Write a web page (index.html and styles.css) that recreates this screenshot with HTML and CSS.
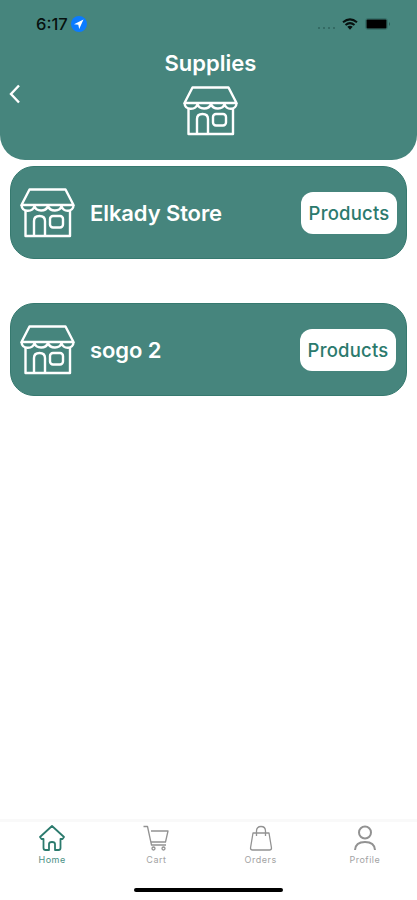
FILE: index.html
```
<!DOCTYPE html>
<html lang="en">

<head>
    <meta charset="UTF-8">
    <title>Supplies</title>
    <link rel="stylesheet" href="styles.css">
</head>

<body>
    <!-- Store icon, used in the header and in each card -->
    <svg class="symbols">
        <symbol id="store" viewBox="0 0 56 50">
            <path d="M9.500 1.500H45.500L53.500 17H1.500L9.500 1.500Z" />
            <path d="M1.500 17C2 24.500 12.500 24.500 14.500 18C16 24 26 24 28 18C30 24 40 24 41.500 18C43.500 24.500 53.500 24.500 53.500 17" />
            <path d="M5.500 22.500V48H50V22.500" />
            <path d="M14 48V33Q14 28 19.500 28T25 33V48" />
            <rect x="30" y="28" width="13" height="11.500" rx="3" />
        </symbol>
    </svg>

    <div class="screen">
        <header class="header">
            <div class="status">
                <span class="time">6:17</span>
                <svg class="location" viewBox="0 0 16 16">
                    <circle cx="8" cy="8" r="8" fill="#0b7bff" />
                    <path d="M12.500 3.400L3 8.200L7.300 8.800L8.200 13Z" fill="#fff" />
                </svg>
                <div class="signal"><i></i><i></i><i></i><i></i></div>
                <svg class="wifi" viewBox="0 0 16 12">
                    <path d="M1 4.300Q8-1.500 15 4.300M3.500 7Q8 3.300 12.500 7" fill="none" stroke="#07110f" stroke-width="2" />
                    <path d="M5.300 8.800Q8 6.800 10.700 8.800L8 11.700Z" fill="#07110f" />
                </svg>
                <svg class="battery" viewBox="0 0 26 12">
                    <rect x=".5" y=".5" width="22" height="11" rx="2.500" fill="none" stroke="#37706a" />
                    <rect x="1.500" y="1.500" width="20" height="9" rx="1" fill="#000" />
                    <path d="M24 4Q26 6 24 8Z" fill="#2b5953" />
                </svg>
            </div>
            <h1 class="title">Supplies</h1>
            <div class="nav">
                <svg class="back" viewBox="0 0 12 20"><path d="M10 1.500L2 10L10 18.500" /></svg>
                <svg class="store"><use href="#store" /></svg>
            </div>
        </header>

        <main class="list">
            <div class="card">
                <svg class="store"><use href="#store" /></svg>
                <h2 class="name">Elkady Store</h2>
                <button class="products">Products</button>
            </div>
            <div class="card">
                <svg class="store"><use href="#store" /></svg>
                <h2 class="name">sogo 2</h2>
                <button class="products">Products</button>
            </div>
        </main>

        <nav class="tabs">
            <div class="tab active">
                <svg viewBox="0 0 28 28">
                    <path d="M14 2L26 13L24.500 15H22.500V24Q22.500 26 20.500 26H17V20Q17 18 14 18T11 20V26H7.500Q5.500 26 5.500 24V15H3.500L2 13Z" />
                </svg>
                <span>Home</span>
            </div>
            <div class="tab">
                <svg viewBox="0 0 28 28">
                    <path d="M1.500 2.500H5.500L9.500 21H24M9 7H26L23.500 18H9" />
                    <circle cx="11.500" cy="24.500" r="1.500" />
                    <circle cx="21.500" cy="24.500" r="1.500" />
                </svg>
                <span>Cart</span>
            </div>
            <div class="tab">
                <svg viewBox="0 0 28 28">
                    <path d="M6 9H22L24.500 24Q24.500 26 22.500 26H5.500Q3.500 26 3.500 24Z" />
                    <path d="M9.500 12V7Q9.500 2.500 14 2.500T18.500 7V12" />
                </svg>
                <span>Orders</span>
            </div>
            <div class="tab profile">
                <svg viewBox="0 0 28 28">
                    <circle cx="14" cy="8.500" r="6" />
                    <path d="M4 26Q4.500 18 14 18T24 26" />
                </svg>
                <span>Profile</span>
            </div>
        </nav>
        <div class="home-bar"></div>
    </div>
</body>

</html>
```
FILE: styles.css
```
/* General Styling */
* {
    box-sizing: border-box;
}

body {
    margin: 0;
    font-family: Inter, "Liberation Sans", sans-serif;
    background-color: white;
}

svg {
    display: block;
    flex-shrink: 0;
}

.symbols {
    display: none;
}

.screen {
    height: 900px;
    display: flex;
    flex-direction: column;
    overflow: hidden;
}

/* Header */
.header {
    height: 160px;
    background: #46857d;
    border-radius: 0 0 25px 25px;
}

.status {
    display: flex;
    align-items: center;
    height: 48px;
    padding: 0 26px 0 36px;
    color: #07110f;
}

.time {
    width: 35px;
    font-size: 16.5px;
    font-weight: 500;
}

.location {
    width: 16px;
    height: 16px;
}

.signal {
    display: flex;
    gap: 3px;
    margin: 8px 7px 0 auto;
}

.signal i {
    width: 2px;
    height: 2px;
    border-radius: 50%;
    background: #2f635c;
}

.wifi {
    width: 16px;
    height: 12px;
    margin-right: 7px;
}

.battery {
    width: 26px;
    height: 12px;
}

.title {
    margin: 0;
    padding-left: 4px;
    height: 30px;
    line-height: 30px;
    font-size: 22px;
    font-weight: 600;
    text-align: center;
    color: white;
}

.nav {
    display: grid;
    grid-template-columns: 1fr 56px 1fr;
    padding: 8px 0 0 4px;
}

.back {
    width: 12px;
    height: 20px;
    margin: -2px 0 0 5px;
    fill: none;
    stroke: white;
    stroke-width: 2.4;
}

.store {
    width: 56px;
    height: 50px;
    fill: none;
    stroke: white;
    stroke-width: 2.4;
    stroke-linejoin: round;
}

/* Store cards */
.list {
    flex: 1;
    display: flex;
    flex-direction: column;
    gap: 44px;
    padding: 6px 10px 0;
}

.card {
    display: flex;
    align-items: center;
    height: 93px;
    padding: 0 10px 0 9px;
    background: #46857d;
    border: 1px solid #36796f;
    border-radius: 24px;
}

.card:first-child {
    padding-right: 9px;
}

.name {
    flex: 1;
    margin: 0 0 0 14px;
    font-size: 22px;
    font-weight: 600;
    letter-spacing: -0.1px;
    color: white;
}

.products {
    width: 96px;
    height: 42px;
    padding: 0;
    border: 0;
    border-radius: 12px;
    background: white;
    font-family: inherit;
    font-size: 18.5px;
    font-weight: 500;
    letter-spacing: 0.2px;
    color: #2b7a6d;
}

/* Bottom tabs */
.tabs {
    display: flex;
    height: 69px;
    border-top: 3px solid #f9f9f9;
    padding-top: 2px;
}

.tab {
    flex: 1;
    display: flex;
    flex-direction: column;
    align-items: center;
    font-size: 9px;
    letter-spacing: 0.5px;
    line-height: 12px;
    color: #a3a3a3;
}

.tab svg {
    width: 28px;
    height: 28px;
    margin-bottom: 2px;
    fill: none;
    stroke: #929292;
    stroke-width: 1.3;
    stroke-linejoin: round;
}

.tab.profile svg {
    stroke-width: 2;
}

.tab.active {
    color: #4a9085;
}

.tab.active svg {
    stroke: #2b7a6d;
    stroke-width: 1.8;
}

.home-bar {
    width: 149px;
    height: 4px;
    margin: 0 auto 8px;
    border-radius: 2px;
    background: black;
}
```
